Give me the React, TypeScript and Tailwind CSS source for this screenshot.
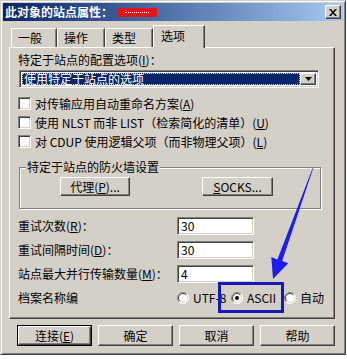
import React from "react";

const raised =
  "border border-t-white border-l-white border-r-[#404040] border-b-[#404040] shadow-[inset_-1px_-1px_0_#808080] bg-[#d4d0c8]";
const sunken =
  "border border-t-[#808080] border-l-[#808080] border-r-white border-b-white shadow-[inset_1px_1px_0_#404040,inset_-1px_-1px_0_#d4d0c8] bg-white";

function Check({ children }: { children: React.ReactNode }) {
  return (
    <div className="h-[19px] flex items-center">
      <span className={`w-[13px] h-[13px] ${sunken}`} />
      <span className="ml-[4px] whitespace-nowrap">{children}</span>
    </div>
  );
}

function Radio({ checked, label, w }: { checked?: boolean; label: string; w: string }) {
  return (
    <div className={`flex items-center ${w}`}>
      <svg width="12" height="12" viewBox="0 0 12 12">
        <circle cx="6" cy="6" r="5.5" fill="#fff" />
        <path d="M2.1 9.9 A5.5 5.5 0 0 1 9.9 2.1" stroke="#808080" fill="none" />
        <path d="M9.9 2.1 A5.5 5.5 0 0 1 2.1 9.9" stroke="#fff" fill="none" />
        <path d="M2.8 9.2 A4.5 4.5 0 0 1 9.2 2.8" stroke="#404040" fill="none" />
        <path d="M9.2 2.8 A4.5 4.5 0 0 1 2.8 9.2" stroke="#d4d0c8" fill="none" />
        {checked && <circle cx="6" cy="6" r="2" fill="#000" />}
      </svg>
      <span className="ml-[4px] whitespace-nowrap">{label}</span>
    </div>
  );
}

function Field({ label, value }: { label: React.ReactNode; value: string }) {
  return (
    <div className="flex items-center h-[18px]">
      <span className="w-[159px] whitespace-nowrap">{label}</span>
      <div className={`w-[77px] h-[18px] ${sunken} flex items-center pl-[3px]`}>{value}</div>
    </div>
  );
}

const tabs = ["一般", "操作", "类型"];

export default function App() {
  return (
    <div className="relative w-[347px] h-[359px] bg-white font-['Noto_Sans_CJK_SC',sans-serif] text-[12px] leading-none text-black">
      <div className="w-[346px] h-[355px] bg-[#d4d0c8] border border-t-[#d4d0c8] border-l-[#d4d0c8] border-r-[#404040] border-b-[#404040] shadow-[inset_1px_1px_0_#fff,inset_-1px_-1px_0_#808080] p-[2px] flex flex-col">
        {/* title bar */}
        <div className="h-[18px] flex items-center pl-[2px] pr-[2px] bg-linear-to-r from-[#0a246a] to-[#a6caf0]">
          <span className="font-bold text-white">此对象的站点属性：</span>
          <span className="ml-[4px] w-[40px] h-[9px] bg-[#e3141c] flex items-center justify-center">
            <span className="w-[24px] border-t border-dotted border-white" />
          </span>
          <div className={`ml-auto w-[16px] h-[14px] ${raised} flex items-center justify-center`}>
            <svg width="8" height="7" viewBox="0 0 8 7">
              <path d="M0 0h2l2 2.5L6 0h2L5 3.5 8 7H6L4 4.5 2 7H0l3-3.5z" fill="#000" />
            </svg>
          </div>
        </div>

        <div className="pl-[6px] pr-[8px] flex flex-col">
          {/* tabs */}
          <div className="mt-[4px] h-[22px] flex items-end">
            {tabs.map((t, i) => (
              <div
                key={t}
                className={`h-[19px] ${i === 0 ? "ml-[2px] w-[46px]" : "w-[48px]"} border-t border-l border-t-white border-l-white border-r border-r-[#404040] shadow-[inset_-1px_0_0_#808080] pl-[6px] pt-[3px]`}
              >
                {t}
              </div>
            ))}
            <div className="relative z-10 -mb-[1px] h-[23px] w-[52px] bg-[#d4d0c8] border-t border-l border-t-white border-l-white border-r border-r-[#404040] shadow-[inset_-1px_0_0_#808080] pl-[7px] pt-[4px]">
              选项
            </div>
          </div>

          {/* panel */}
          <div className="h-[272px] border border-t-white border-l-white border-r-[#404040] border-b-[#404040] shadow-[inset_-1px_-1px_0_#808080] pl-[8px] flex flex-col">
            <div className="mt-[6px] h-[12px]">
              特定于站点的配置选项(<u>I</u>)：
            </div>
            <div className={`mt-[4px] ml-[1px] w-[300px] h-[18px] ${sunken} flex items-center p-[2px]`}>
              <div className="flex-1 h-full bg-[#0a246a] text-white border border-dotted border-[#e0e060] flex items-center pl-[1px]">
                使用特定于站点的选项
              </div>
              <div className={`w-[16px] h-full ${raised} flex items-center justify-center`}>
                <svg width="7" height="4" viewBox="0 0 7 4">
                  <path d="M0 0h7L3.5 4z" fill="#000" />
                </svg>
              </div>
            </div>

            <div className="mt-[6px] flex flex-col">
              <Check>
                对传输应用自动重命名方案(<u>A</u>)
              </Check>
              <Check>
                使用 NLST 而非 LIST（检索简化的清单）(<u>U</u>)
              </Check>
              <Check>
                对 CDUP 使用逻辑父项（而非物理父项）(<u>L</u>)
              </Check>
            </div>

            <fieldset className="mt-[10px] ml-[1px] w-[302px] border border-[#808080] shadow-[inset_1px_1px_0_#fff,1px_1px_0_#fff]">
              <legend className="ml-[6px] px-[1px] bg-[#d4d0c8] h-[12px]">特定于站点的防火墙设置</legend>
              <div className="flex pt-[4px] pb-[12px] pl-[40px]">
                <div className={`w-[70px] h-[19px] ${raised} flex items-center justify-center`}>
                  代理(<u>P</u>)...
                </div>
                <div className={`ml-[72px] w-[71px] h-[19px] ${raised} flex items-center justify-center`}>
                  <u>S</u>OCKS...
                </div>
              </div>
            </fieldset>

            <div className="mt-[8px] flex flex-col gap-[6px]">
              <Field label={<>重试次数(<u>R</u>)：</>} value="30" />
              <Field label={<>重试间隔时间(<u>D</u>)：</>} value="30" />
              <Field label={<>站点最大并行传输数量(<u>M</u>)：</>} value="4" />
              <div className="flex items-center h-[18px]">
                <span className="w-[159px]">档案名称编</span>
                <Radio label="UTF-8" w="w-[54px]" />
                <Radio label="ASCII" w="w-[53px]" checked />
                <Radio label="自动" w="w-[50px]" />
              </div>
            </div>
          </div>

          {/* buttons */}
          <div className="mt-[6px] flex justify-end gap-[6px]">
            <div className="w-[75px] h-[21px] border border-black">
              <div className={`w-full h-full ${raised} flex items-center justify-center`}>
                连接(<u>E</u>)
              </div>
            </div>
            <div className={`w-[75px] h-[21px] ${raised} flex items-center justify-center`}>确定</div>
            <div className={`w-[75px] h-[21px] ${raised} flex items-center justify-center`}>取消</div>
            <div className={`w-[75px] h-[21px] ${raised} flex items-center justify-center`}>帮助</div>
          </div>
        </div>
      </div>

      {/* annotation: highlight box */}
      <div className="absolute left-[218px] top-[282px] w-[66px] h-[31px] border-[3px] border-[#1818b8]" />
      {/* annotation: arrow */}
      <svg className="absolute left-0 top-0 pointer-events-none" width="347" height="359" viewBox="0 0 347 359">
        <polygon
          points="313.3,168 312.7,168 277.4,259.4 271.3,257.1 273,279 288.3,263.3 282.2,261"
          fill="#1c1cf0"
        />
      </svg>
    </div>
  );
}
